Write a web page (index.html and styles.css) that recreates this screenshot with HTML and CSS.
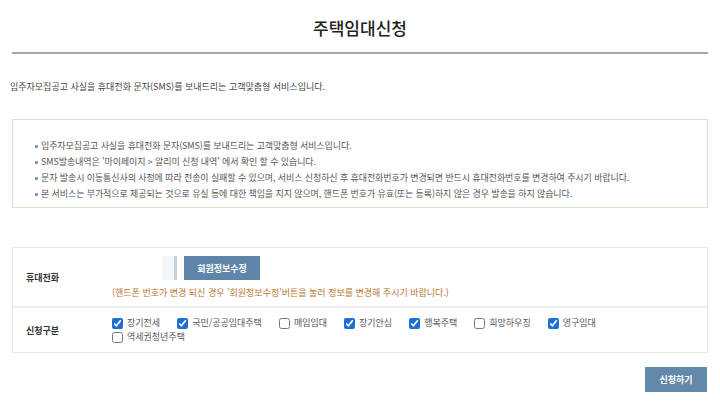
FILE: index.html
```html
<!DOCTYPE html>
<html lang="ko">
<head>
    <meta charset="UTF-8">
    <title>주택임대신청</title>
    <link rel="stylesheet" href="styles.css">
</head>
<body>
    <div class="page">
        <h1 class="title">주택임대신청</h1>

        <p class="intro">임주자모집공고 사실을 휴대전화 문자(SMS)를 보내드리는 고객맞춤형 서비스입니다.</p>

        <div class="notice">
            <ul>
                <li>입주자모집공고 사실을 휴대전화 문자(SMS)를 보내드리는 고객맞춤형 서비스입니다.</li>
                <li>SMS발송내역은 '마이페이지 &gt; 알리미 신청 내역' 에서 확인 할 수 있습니다.</li>
                <li>문자 발송시 이동통신사의 사정에 따라 전송이 실패할 수 있으며, 서비스 신청하신 후 휴대전화번호가 변경되면 반드시 휴대전화번호를 변경하여 주시기 바랍니다.</li>
                <li>본 서비스는 부가적으로 제공되는 것으로 유실 등에 대한 책임을 지지 않으며, 핸드폰 번호가 유효(또는 등록)하지 않은 경우 발송을 하지 않습니다.</li>
            </ul>
        </div>

        <div class="form-table">
            <div class="form-row phone-row">
                <div class="form-label">휴대전화</div>
                <div class="form-field">
                    <div class="phone-controls">
                        <span class="phone-box"></span>
                        <button class="btn">회원정보수정</button>
                    </div>
                    <p class="note">(핸드폰 번호가 변경 되신 경우 '회원정보수정'버튼을 눌러 정보를 변경해 주시기 바랍니다.)</p>
                </div>
            </div>
            <div class="form-row type-row">
                <div class="form-label">신청구분</div>
                <div class="form-field">
                    <div class="check-list">
                        <label><input type="checkbox" checked> 장기전세</label>
                        <label><input type="checkbox" checked> 국민/공공임대주택</label>
                        <label><input type="checkbox"> 매입임대</label>
                        <label><input type="checkbox" checked> 장기안심</label>
                        <label><input type="checkbox" checked> 행복주택</label>
                        <label><input type="checkbox"> 희망하우징</label>
                        <label><input type="checkbox" checked> 영구임대</label>
                        <label><input type="checkbox"> 역세권청년주택</label>
                    </div>
                </div>
            </div>
        </div>

        <div class="actions">
            <button class="btn submit">신청하기</button>
        </div>
    </div>
</body>
</html>
```

FILE: styles.css
```css
body {
    margin: 0;
    background-color: #fff;
    color: #333;
    font-family: "Noto Sans CJK KR", "Noto Sans", sans-serif;
}

.page {
    margin: 0 12px;
}

.title {
    margin: 0;
    padding: 16px 0 12px;
    font-size: 17px;
    line-height: 24px;
    font-weight: 500;
    text-align: center;
    color: #222;
    border-bottom: 2px solid #a8a8a8;
}

.intro {
    margin: 27px 0 0 -2px;
    font-size: 9px;
    line-height: 12px;
    color: #444;
}

.notice {
    margin-top: 26px;
    border: 1px solid #d5e6c9;
    padding: 18px 20px 5px;
}

.notice ul {
    list-style: none;
    margin: 0;
    padding: 0 0 0 2px;
}

.notice li {
    position: relative;
    padding-left: 6px;
    font-size: 9px;
    line-height: 16px;
    letter-spacing: -0.1px;
    color: #555;
}

.notice li::before {
    content: "";
    position: absolute;
    left: 0;
    top: 7px;
    width: 3px;
    height: 3px;
    background-color: #7f9cb8;
}

.form-table {
    margin-top: 39px;
    border: 1px solid #e6e6e6;
}

.form-row {
    display: flex;
    align-items: center;
}

.type-row {
    border-top: 2px solid #eeeeee;
}

.form-label {
    width: 86px;
    padding-left: 13px;
    font-size: 9px;
    font-weight: bold;
    color: #333;
}

.form-field {
    flex: 1;
}

.phone-row .form-field {
    padding: 8px 0 6px;
}

.phone-controls {
    display: flex;
    align-items: stretch;
    padding-left: 50px;
}

.phone-box {
    width: 12px;
    height: 24px;
    background-color: #f3f6f9;
    border-right: 3px solid #c5d2de;
    margin-right: 7px;
}

.btn {
    border: none;
    background-color: #5f86a8;
    color: #fff;
    font-family: inherit;
    font-size: 9px;
    font-weight: bold;
    height: 24px;
    width: 76px;
    padding: 0;
}

.note {
    margin: 6px 0 0;
    font-size: 9px;
    line-height: 14px;
    color: #b9762f;
}

.type-row .form-field {
    padding: 8px 0 8px;
}

.check-list {
    display: flex;
    flex-wrap: wrap;
    width: 520px;
    column-gap: 17px;
}

.check-list label {
    display: flex;
    align-items: center;
    font-size: 9px;
    line-height: 14px;
    color: #555;
}

.check-list input {
    width: 11px;
    height: 11px;
    margin: 0 4px 0 0;
    accent-color: #1b6fd6;
}

.actions {
    display: flex;
    justify-content: flex-end;
    margin-top: 14px;
}

.submit {
    width: 62px;
    height: 25px;
    margin-right: 1px;
    background-color: #6389aa;
}
```
